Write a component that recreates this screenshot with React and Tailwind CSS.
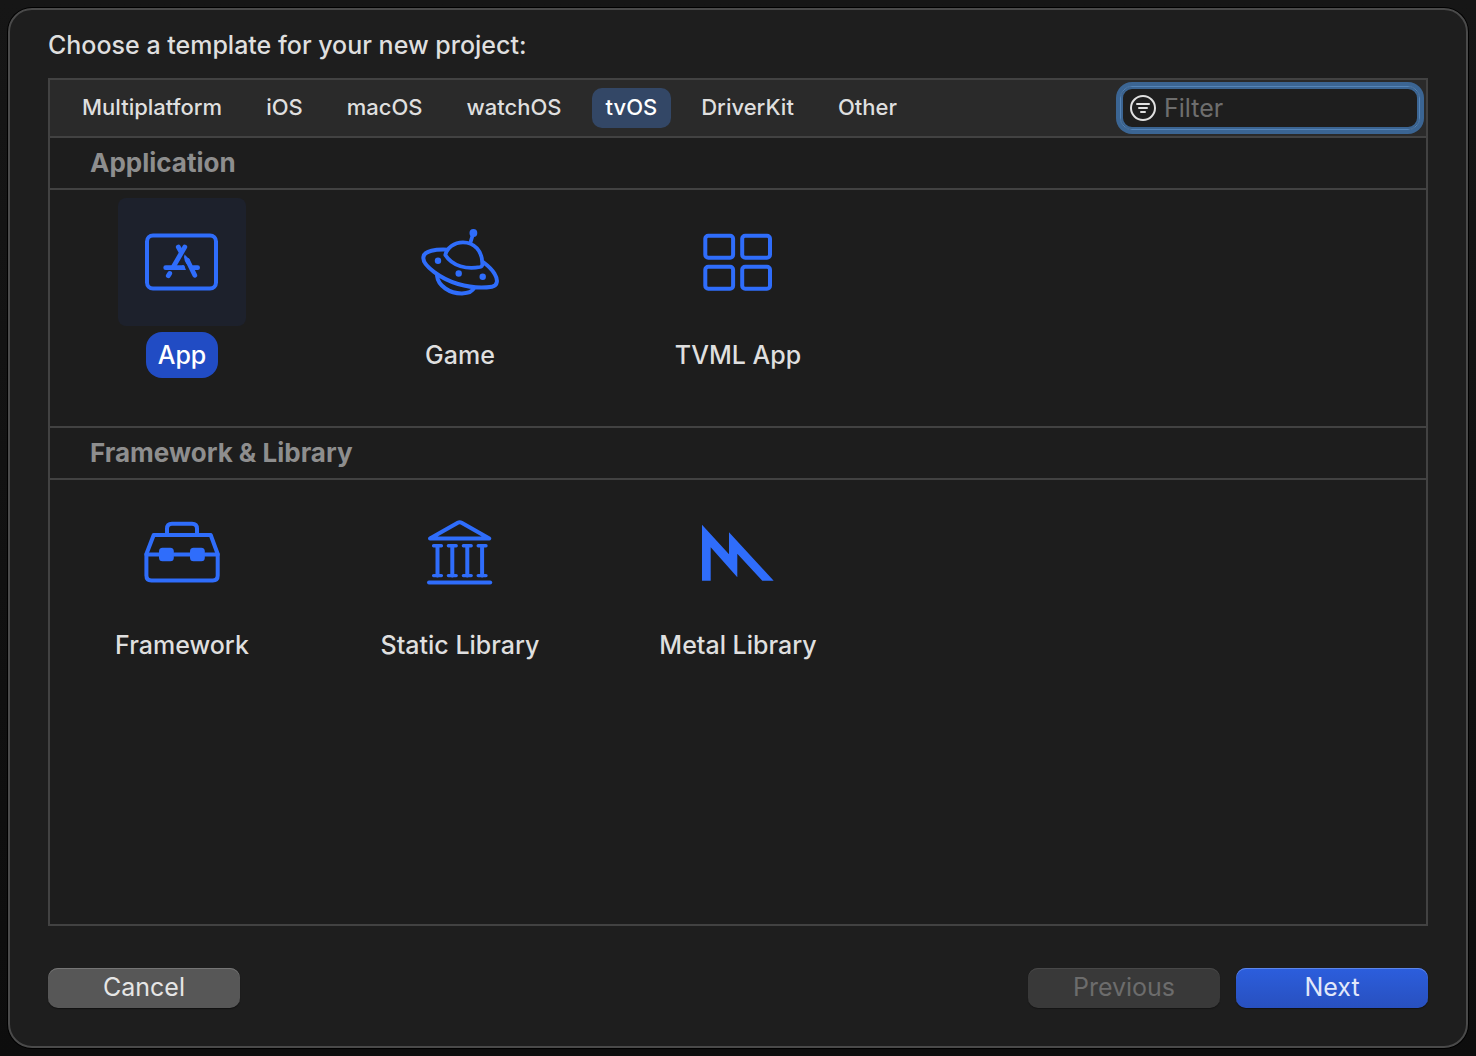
import React, { useState } from "react";
import clsx from "clsx";

const PLATFORMS = ["Multiplatform", "iOS", "macOS", "watchOS", "tvOS", "DriverKit", "Other"];

const SECTIONS = [
  {
    title: "Application",
    items: [
      { name: "App", Icon: AppIcon },
      { name: "Game", Icon: GameIcon },
      { name: "TVML App", Icon: GridIcon },
    ],
  },
  {
    title: "Framework & Library",
    items: [
      { name: "Framework", Icon: ToolboxIcon },
      { name: "Static Library", Icon: ColumnsIcon },
      { name: "Metal Library", Icon: MetalIcon },
    ],
  },
];

export default function App() {
  const [platform, setPlatform] = useState("tvOS");
  const [selected, setSelected] = useState("App");
  const [filter, setFilter] = useState("");

  return (
    <div className="flex min-h-screen bg-linear-to-b from-[#161616] to-[#0d0d0d] p-2 font-['Inter',sans-serif] text-[25px] leading-8 text-[#dfdfdf]">
      <main className="flex flex-1 flex-col rounded-3xl border-2 border-[#4a4a4a] bg-[#1e1e1e] px-[38px] pt-[19px] pb-[38px] shadow-[0_0_0_1px_#000]">
        <h1 className="mb-[17px] font-medium">Choose a template for your new project:</h1>

        <section className="flex flex-1 flex-col border-2 border-[#424242] bg-[#1d1d1d]">
          <div className="flex h-[58px] items-center justify-between border-b-2 border-[#424242] bg-[#2a2a2a] pr-1.5 pl-[18px]">
            <nav className="flex gap-4">
              {PLATFORMS.map((p) => (
                <button
                  key={p}
                  onClick={() => setPlatform(p)}
                  className={clsx(
                    "h-10 rounded-[10px] px-3.5 pb-0.5 text-[22px] font-medium",
                    p === platform && "bg-[#334766] text-white"
                  )}
                >
                  {p}
                </button>
              ))}
            </nav>
            <FilterField value={filter} onChange={setFilter} />
          </div>

          {SECTIONS.map((s, i) => (
            <TemplateSection
              key={s.title}
              title={s.title}
              first={i === 0}
              items={s.items.filter((t) => t.name.toLowerCase().includes(filter.toLowerCase()))}
              selected={selected}
              onSelect={setSelected}
            />
          ))}
        </section>

        <footer className="mt-[42px] flex gap-4">
          <button className="mr-auto h-10 w-48 rounded-[10px] bg-[#575757] pb-0.5 text-[#e6e6e6] shadow-[inset_0_1px_0_#757575,0_1px_1px_#111]">
            Cancel
          </button>
          <button
            disabled
            className="h-10 w-48 rounded-[10px] bg-[#393939] pb-0.5 text-[#6c6c6c] shadow-[inset_0_1px_0_#484848,0_1px_1px_#151515]"
          >
            Previous
          </button>
          <button className="h-10 w-48 rounded-[10px] bg-linear-to-b from-[#2c5edd] to-[#2850bf] pb-0.5 text-[#e2e8fa] shadow-[inset_0_1px_0_#5d86ea,0_1px_1px_#111]">
            Next
          </button>
        </footer>
      </main>
    </div>
  );
}

function FilterField({ value, onChange }) {
  return (
    <label className="flex h-11 w-[300px] items-center gap-[7px] rounded-xl border border-[#5484b8] bg-[#1e1e1e] pl-2 shadow-[0_0_0_4px_#3b6593,inset_0_0_0_2px_#3b6593]">
      <svg width="28" height="28" viewBox="0 0 28 28" fill="none" stroke="#e0e0e0" strokeWidth="2" strokeLinecap="round">
        <circle cx="14" cy="14" r="12" />
        <path d="M8 10h12M10 14h8M12 18h4" />
      </svg>
      <input
        type="text"
        aria-label="Filter"
        placeholder="Filter"
        value={value}
        onChange={(e) => onChange(e.target.value)}
        className="min-w-0 flex-1 bg-transparent outline-none placeholder:text-[#6e6e6e]"
      />
    </label>
  );
}

function TemplateSection({ title, items, selected, onSelect, first }) {
  return (
    <div className={clsx(!first && "border-t-2 border-[#424242]")}>
      <h2 className="h-[52px] border-b-2 border-[#424242] pt-[9px] pl-10 text-[26px] font-bold text-[#8e8e8e]">
        {title}
      </h2>
      <div className="flex flex-wrap gap-[38px] pt-2 pb-12 pl-3">
        {items.map(({ name, Icon }) => {
          const active = name === selected;
          return (
            <button key={name} onClick={() => onSelect(name)} className="flex w-60 flex-col items-center gap-1.5">
              <span className={clsx("rounded-lg text-[#2f6dfb]", active && "bg-[#1d212c]")}>
                <Icon />
              </span>
              <span
                className={clsx("rounded-2xl px-3 py-[7px] font-medium", active && "bg-[#214cc4] text-white")}
              >
                {name}
              </span>
            </button>
          );
        })}
      </div>
    </div>
  );
}

function Glyph({ children }) {
  return (
    <svg
      width="128"
      height="128"
      viewBox="0 0 128 128"
      fill="none"
      stroke="currentColor"
      strokeWidth="4"
      strokeLinecap="round"
      strokeLinejoin="round"
    >
      {children}
    </svg>
  );
}

function AppIcon() {
  return (
    <Glyph>
      <rect x="29" y="37.5" width="69" height="53" rx="6" />
      <g strokeWidth="4.8">
        <path d="M66.8 49L55.8 68" />
        <path d="M60.3 49l2.4 4.4M47.7 69.7H64.5M75.3 69.7H79.6M51.7 75.4l-1.4 2.3" />
        <path d="M69.6 62.5l7.2 14.8" />
      </g>
      <path d="M66.6 56.6Q65.2 59.5 66.7 62.5L68.5 66L72 62Z" fill="currentColor" stroke="none" />
      <path d="M64 67.3H66L68 72.1H64z" fill="currentColor" stroke="none" />
    </Glyph>
  );
}

function GameIcon() {
  return (
    <Glyph>
      <circle cx="77.4" cy="35" r="3.9" fill="currentColor" stroke="none" />
      <path
        strokeWidth="3.8"
        d="M77 36l-2.7 9M49.3 57C51 50 58 44.3 67 44.3C78 44.3 86.8 53 86.3 66.5Q86.3 68.5 84 69C71 71.5 56.5 68.5 49.3 57Z"
      />
      <path
        strokeWidth="4"
        d="M51.5 51.7C41 51.3 27.3 52 27.3 60C27.3 68 45 81 62 86C74 89.5 88 90 96 88.7C102 87.6 102 81.5 98.7 76C96 71 91 67 87 64"
      />
      <path strokeWidth="4" d="M41 77.5C42 88 54 95.7 66 95.5C72.5 95.2 76.5 93.5 78 90" />
      <g fill="currentColor" stroke="none">
        <circle cx="42" cy="62.7" r="3.2" />
        <circle cx="62.7" cy="75.5" r="3.2" />
        <circle cx="86.7" cy="78.7" r="3.2" />
      </g>
    </Glyph>
  );
}

function GridIcon() {
  return (
    <Glyph>
      <rect x="31.3" y="37.8" width="27.8" height="22" rx="3" />
      <rect x="68.2" y="37.8" width="27.8" height="22" rx="3" />
      <rect x="31.3" y="68.7" width="27.8" height="22" rx="3" />
      <rect x="68.2" y="68.7" width="27.8" height="22" rx="3" />
    </Glyph>
  );
}

function ToolboxIcon() {
  return (
    <Glyph>
      <path d="M28.4 66L35.7 47H92.7L99.7 66V87.4Q99.7 92.4 94.7 92.4H33.4Q28.4 92.4 28.4 87.4Z" />
      <path d="M28.4 66.6H99.7M49 46V40.7Q49 35.7 54 35.7H74Q79 35.7 79 40.7V46" />
      <g fill="currentColor" stroke="none">
        <rect x="41" y="59.7" width="14.8" height="13.5" rx="3.5" />
        <rect x="72" y="59.7" width="14.8" height="13.5" rx="3.5" />
      </g>
    </Glyph>
  );
}

function ColumnsIcon() {
  return (
    <Glyph>
      <path d="M34 50.6L61.8 34.7Q63.7 33.7 65.6 34.7L93.3 50.6Z" />
      <path d="M41.5 58V87.5M56.3 58V87.5M71.3 58V87.5M86.1 58V87.5" />
      <path
        d="M37.6 57.7h7.8M52.4 57.7h7.8M67.4 57.7h7.8M82.2 57.7h7.8M37.6 87.6h7.8M52.4 87.6h7.8M67.4 87.6h7.8M82.2 87.6h7.8"
        strokeWidth="3.4"
      />
      <path d="M33 94.6H94.2" />
    </Glyph>
  );
}

function MetalIcon() {
  return (
    <Glyph>
      <path
        d="M28 36.7L55 66.3V44.3L99.7 92.7H88.3L63.3 65.7V89.3L36.7 59.3V92.7H28Z"
        fill="currentColor"
        stroke="none"
      />
    </Glyph>
  );
}
